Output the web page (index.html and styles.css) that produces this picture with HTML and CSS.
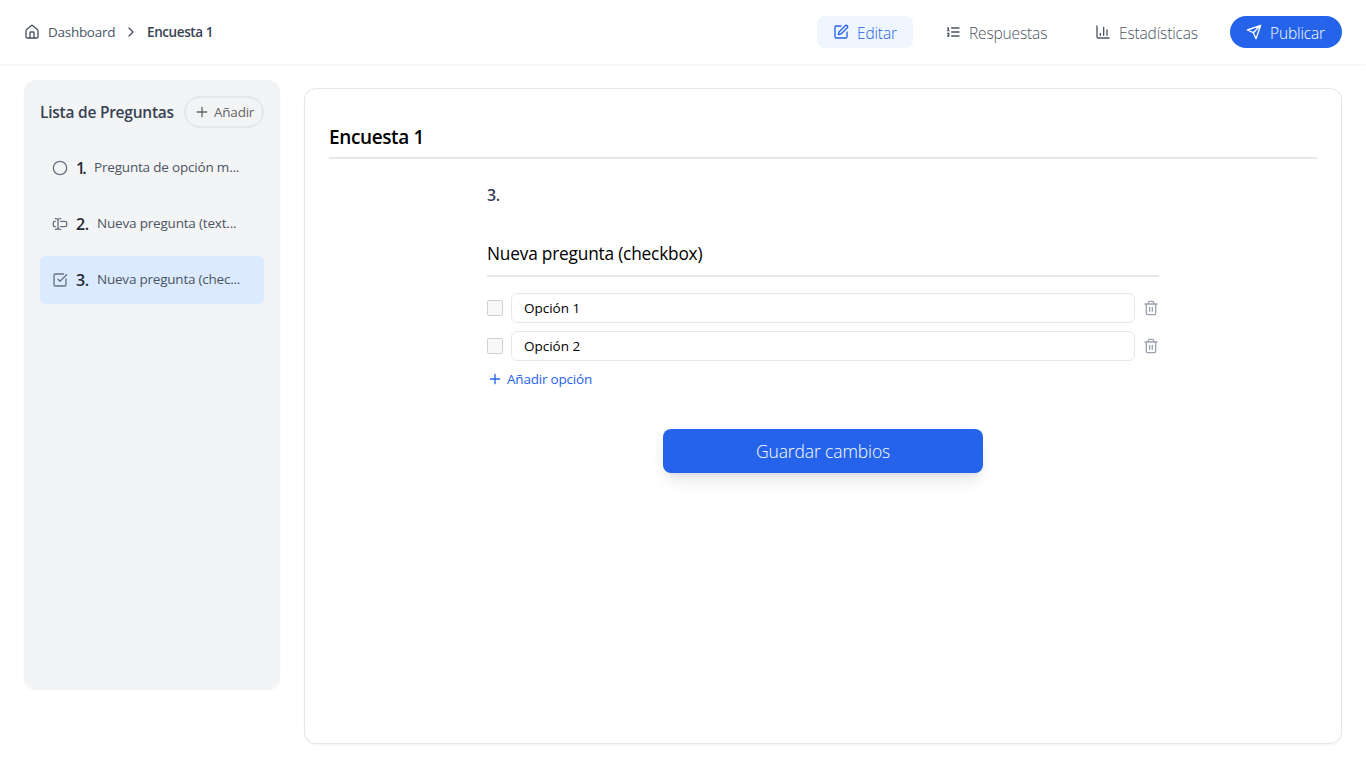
FILE: index.html
```html
<!DOCTYPE html>
<html lang="es">
<head>
<meta charset="utf-8">
<title>Encuesta 1</title>
<link rel="stylesheet" href="styles.css">
</head>
<body>
<header class="topbar">
  <nav class="crumbs">
    <svg class="icon" viewBox="0 0 24 24"><path d="M15 21v-8a1 1 0 0 0-1-1h-4a1 1 0 0 0-1 1v8"/><path d="M3 10a2 2 0 0 1 .709-1.528l7-5.999a2 2 0 0 1 2.582 0l7 5.999A2 2 0 0 1 21 10v9a2 2 0 0 1-2 2H5a2 2 0 0 1-2-2z"/></svg>
    <span class="crumb-link">Dashboard</span>
    <svg class="icon chevron" viewBox="0 0 24 24"><path d="m9 18 6-6-6-6"/></svg>
    <span class="crumb-current">Encuesta 1</span>
  </nav>
  <nav class="tabs">
    <a class="tab tab-edit"><svg class="icon" viewBox="0 0 24 24"><path d="M12 3H5a2 2 0 0 0-2 2v14a2 2 0 0 0 2 2h14a2 2 0 0 0 2-2v-7"/><path d="M18.375 2.625a1 1 0 0 1 3 3l-9.013 9.014a2 2 0 0 1-.853.505l-2.873.84a.5.5 0 0 1-.62-.62l.84-2.873a2 2 0 0 1 .506-.852z"/></svg><span>Editar</span></a>
    <a class="tab tab-answers"><svg class="icon" viewBox="0 0 24 24"><path d="M10 12h11M10 18h11M10 6h11M4 10h2M4 6h1v4M6 18H4c0-1 2-2 2-3s-1-1.500-2-1"/></svg><span>Respuestas</span></a>
    <a class="tab tab-stats"><svg class="icon" viewBox="0 0 24 24"><path d="M3 3v16a2 2 0 0 0 2 2h16M18 17V9M13 17V5M8 17v-3"/></svg><span>Estadísticas</span></a>
    <a class="tab tab-publish"><svg class="icon" viewBox="0 0 24 24"><path d="m22 2-7 20-4-9-9-4ZM22 2 11 13"/></svg><span>Publicar</span></a>
  </nav>
</header>
<main class="workspace">
  <aside class="sidebar">
    <div class="sidebar-head">
      <h2>Lista de Preguntas</h2>
      <button class="add"><svg class="icon" viewBox="0 0 24 24"><path d="M5 12h14M12 5v14"/></svg><span>Añadir</span></button>
    </div>
    <ul class="questions">
      <li class="question"><svg class="icon" viewBox="0 0 24 24"><circle cx="12" cy="12" r="10"/></svg><b class="first-number">1.</b><span class="label-one">Pregunta de opción m...</span></li>
      <li class="question"><svg class="icon" viewBox="0 0 24 24"><path d="M5 4h1a3 3 0 0 1 3 3 3 3 0 0 1 3-3h1M13 20h-1a3 3 0 0 1-3-3 3 3 0 0 1-3 3H5M5 16H4a2 2 0 0 1-2-2v-4a2 2 0 0 1 2-2h1M13 8h7a2 2 0 0 1 2 2v4a2 2 0 0 1-2 2h-7M9 7v10"/></svg><b>2.</b><span class="label-two">Nueva pregunta (text...</span></li>
      <li class="question selected"><svg class="icon" viewBox="0 0 24 24"><path d="M21 10.500V19a2 2 0 0 1-2 2H5a2 2 0 0 1-2-2V5a2 2 0 0 1 2-2h12.500M9 11l3 3L22 4"/></svg><b>3.</b><span class="label-three">Nueva pregunta (chec...</span></li>
    </ul>
  </aside>
  <section class="panel">
    <h1>Encuesta 1</h1>
    <div class="editor">
      <div class="number">3.</div>
      <div class="title">Nueva pregunta (checkbox)</div>
      <div class="options">
        <div class="option"><i class="check"></i><div class="field">Opción 1</div><svg class="icon trash" viewBox="0 0 24 24"><path d="M3 6h18M19 6v14a2 2 0 0 1-2 2H7a2 2 0 0 1-2-2V6M8 6V4a2 2 0 0 1 2-2h4a2 2 0 0 1 2 2v2M10 11v6M14 11v6"/></svg></div>
        <div class="option"><i class="check"></i><div class="field">Opción 2</div><svg class="icon trash" viewBox="0 0 24 24"><path d="M3 6h18M19 6v14a2 2 0 0 1-2 2H7a2 2 0 0 1-2-2V6M8 6V4a2 2 0 0 1 2-2h4a2 2 0 0 1 2 2v2M10 11v6M14 11v6"/></svg></div>
      </div>
      <div class="add-option"><svg class="icon" viewBox="0 0 24 24"><path d="M5 12h14M12 5v14"/></svg><span>Añadir opción</span></div>
      <button class="save"><span>Guardar cambios</span></button>
    </div>
  </section>
</main>
</body>
</html>
```
FILE: styles.css
```css
* { box-sizing: border-box; }
body { margin: 0; height: 768px; overflow: hidden; background: #fff; color: #000; font: 14px/20px "Open Sans", "Noto Sans", sans-serif; white-space: nowrap; }
button { font: inherit; }
h1, h2, ul { margin: 0; padding: 0; }
.icon { width: 16px; height: 16px; flex: none; fill: none; stroke: currentColor; stroke-width: 2; stroke-linecap: round; stroke-linejoin: round; }
.topbar { height: 64px; padding: 0 24px; display: flex; align-items: center; justify-content: space-between; background: #fff; box-shadow: 0 1px 2px rgba(0,0,0,.05); }
.crumbs { display: flex; align-items: center; gap: 8px; color: #4b5563; }
.crumb-link { width: 67px; font-size: 13.5px; letter-spacing: -.28px; }
.crumb-current { color: #374151; font-weight: 600; font-size: 13.5px; letter-spacing: -.4px; }
.tabs { display: flex; align-items: center; font-size: 15.5px; font-weight: 300; color: #4b5563; }
.tab { height: 32px; padding: 0 16px; display: flex; align-items: center; gap: 8px; border-radius: 8px; letter-spacing: -.14px; }
.tab span { padding-top: 1px; }
.tab-edit { width: 96px; color: #2563eb; background: #eff6ff; margin-right: 16px; }
.tab-answers { width: 134px; margin-right: 16px; }
.tab-stats { width: 135px; margin-right: 16px; }
.tab-publish { width: 112px; color: #fff; background: #2563eb; border-radius: 16px; }
.workspace { display: flex; align-items: flex-start; gap: 24px; padding: 16px 24px 0; }
.sidebar { width: 256px; height: 609px; padding: 16px; flex: none; border-radius: 12px; background: #f3f4f6; box-shadow: 0 1px 2px rgba(0,0,0,.05); }
.sidebar-head { height: 32px; display: flex; align-items: center; justify-content: space-between; }
.sidebar h2 { font-size: 15.5px; line-height: 24px; font-weight: 600; color: #374151; letter-spacing: -.24px; }
.add { width: 80px; height: 32px; flex: none; display: flex; align-items: center; gap: 4px; padding: 0 0 0 8px; border: 2px solid #e5e7eb; border-radius: 16px; background: transparent; color: #666; font-size: 13.5px; letter-spacing: -.23px; }
.questions { margin-top: 16px; list-style: none; display: grid; gap: 8px; }
.question { height: 48px; padding: 0 12px; display: flex; align-items: center; gap: 8px; border-radius: 6px; color: #4b5563; }
.question .icon { color: #6b7280; }
.question b { width: 13px; font-size: 16px; font-weight: 600; color: #1f2937; letter-spacing: -.3px; }
.question .first-number { width: 10px; letter-spacing: -2.8px; }
.question span { padding-bottom: 3px; font-size: 13.5px; letter-spacing: -.19px; }
.question .label-three { letter-spacing: -.22px; }
.selected { background: #dbeafe; }
.panel { flex: 1; height: 656px; margin-top: 8px; padding: 32px 24px; border: 1px solid #e5e7eb; border-radius: 12px; background: #fff; box-shadow: 0 1px 2px rgba(0,0,0,.05); }
h1 { height: 38px; border-bottom: 2px solid #e5e7eb; font-size: 19px; line-height: 33px; font-weight: 600; letter-spacing: -.38px; }
.editor { width: 672px; margin: 24px auto 0; }
.number { font-size: 16px; line-height: 24px; font-weight: 600; color: #374151; letter-spacing: -.3px; }
.title { margin-top: 32px; height: 38px; border-bottom: 2px solid #e5e7eb; font-size: 17.3px; line-height: 30px; letter-spacing: -.2px; }
.options { display: grid; gap: 8px; margin-top: 16px; }
.option { height: 30px; display: flex; align-items: center; gap: 8px; }
.check { width: 16px; height: 16px; flex: none; border: 1px solid #d1d1d1; border-radius: 2px; background: #f8f8f8; }
.field { height: 30px; flex: 1; padding: 4px 12px; border: 1px solid #e5e7eb; border-radius: 6px; background: #fff; font-size: 13.5px; letter-spacing: -.02px; }
.trash { color: #9ca3af; }
.add-option { margin-top: 8px; height: 20px; display: flex; align-items: center; gap: 4px; color: #2563eb; font-size: 13.5px; letter-spacing: -.2px; }
.save { display: block; width: 320px; height: 44px; margin: 40px auto 0; border: 0; border-radius: 8px; background: #2563eb; color: #fff; font-size: 17.5px; font-weight: 300; letter-spacing: -.12px; box-shadow: 0 10px 15px -3px rgba(0,0,0,.1), 0 4px 6px -4px rgba(0,0,0,.1); }
```
